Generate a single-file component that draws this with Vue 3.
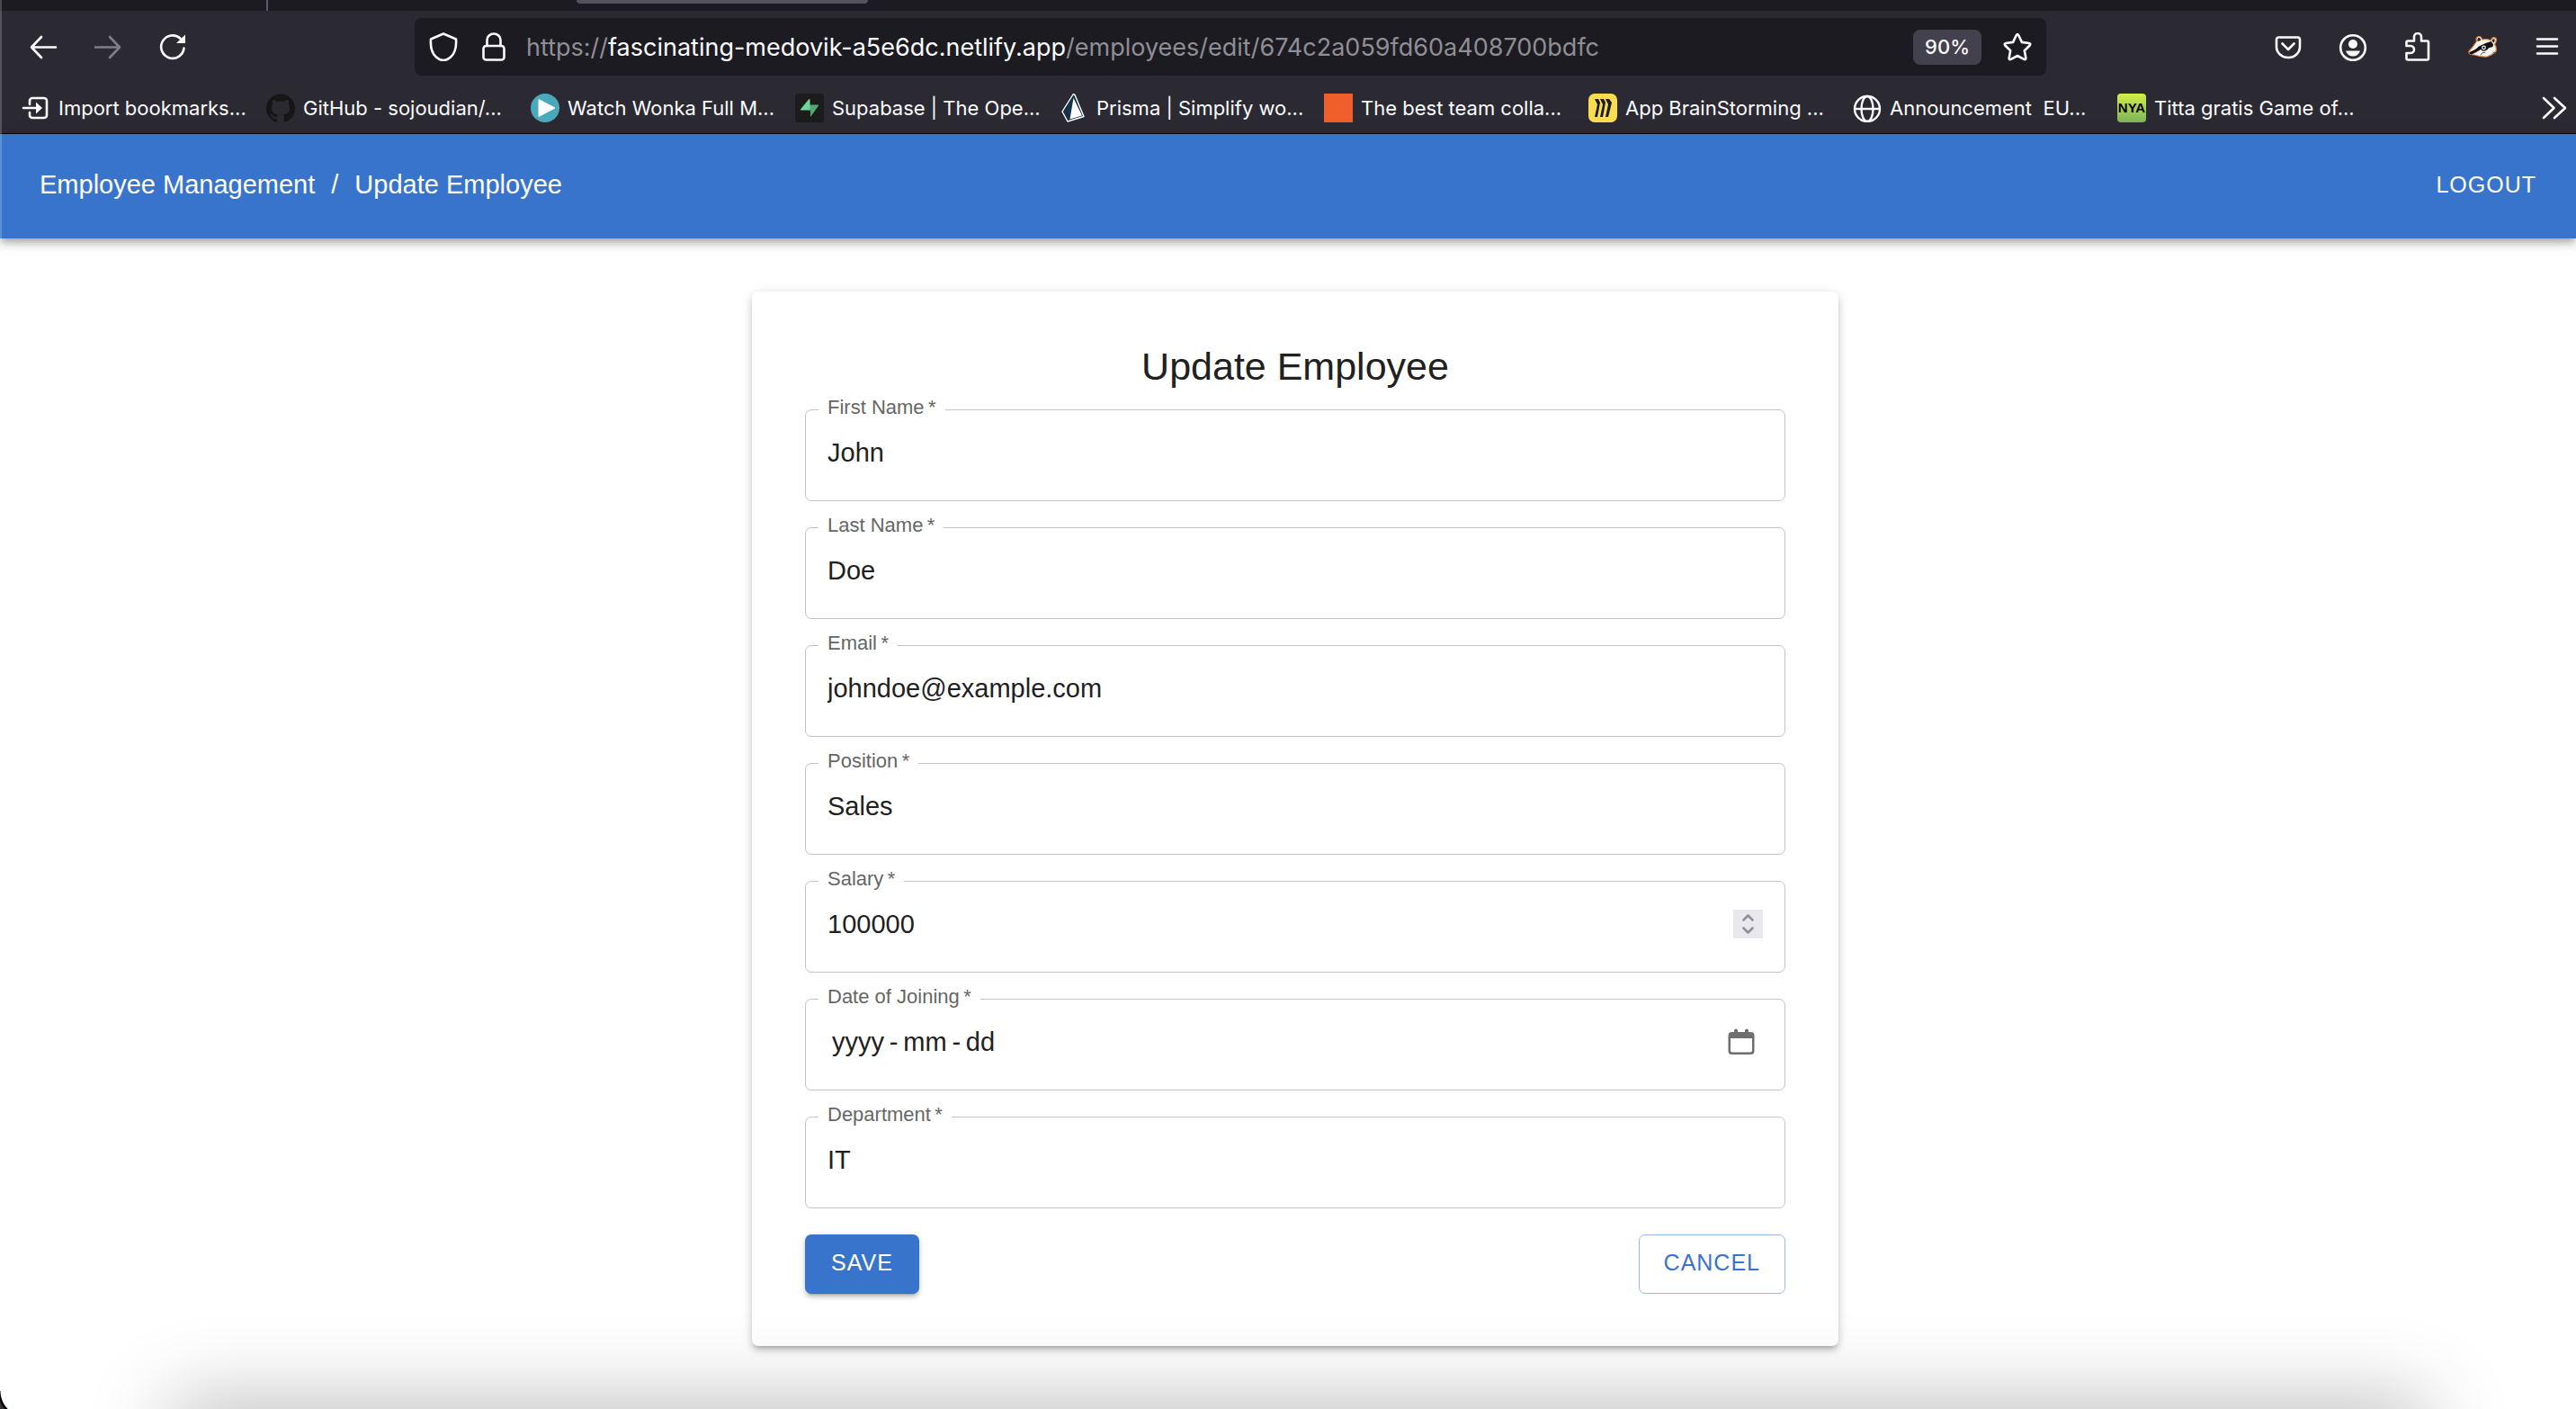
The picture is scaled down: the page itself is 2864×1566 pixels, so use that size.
<script setup>
import { ref } from 'vue'

const githubMark =
  'M12 .297c-6.63 0-12 5.373-12 12 0 5.303 3.438 9.8 8.205 11.385.6.113.82-.258.82-.577 0-.285-.01-1.04-.015-2.04-3.338.724-4.042-1.61-4.042-1.61C4.422 18.07 3.633 17.7 3.633 17.7c-1.087-.744.084-.729.084-.729 1.205.084 1.838 1.236 1.838 1.236 1.07 1.835 2.809 1.305 3.495.998.108-.776.417-1.305.76-1.605-2.665-.3-5.466-1.332-5.466-5.93 0-1.31.465-2.38 1.235-3.22-.135-.303-.54-1.523.105-3.176 0 0 1.005-.322 3.3 1.23.96-.267 1.98-.399 3-.405 1.02.006 2.04.138 3 .405 2.28-1.552 3.285-1.23 3.285-1.23.645 1.653.24 2.873.12 3.176.765.84 1.23 1.91 1.23 3.22 0 4.61-2.805 5.625-5.475 5.92.42.36.81 1.096.81 2.22 0 1.606-.015 2.896-.015 3.286 0 .315.21.69.825.57C20.565 22.092 24 17.592 24 12.297c0-6.627-5.373-12-12-12'

const bookmarks = [
  {
    title: 'Import bookmarks...',
    icon: '<path d="M9 12V8a3 3 0 0 1 3-3h13a3 3 0 0 1 3 3v16a3 3 0 0 1-3 3H12a3 3 0 0 1-3-3v-3M2 16h18" fill="none" stroke="#fbfbfe" stroke-width="2.6" stroke-linecap="round"/><path d="M16 9.500l7 6.500l-7 6.500z" fill="#fbfbfe"/>'
  },
  {
    title: 'GitHub - sojoudian/...',
    icon: `<path transform="scale(1.333)" d="${githubMark}" fill="#161616"/>`
  },
  {
    title: 'Watch Wonka Full M...',
    icon: '<circle cx="16" cy="16" r="16" fill="#4ba9be"/><path d="M9 6.500v19l18-9.500z" fill="#fff" stroke="#fff" stroke-linejoin="round"/>'
  },
  {
    title: 'Supabase | The Ope...',
    icon: '<rect width="32" height="32" rx="3" fill="#1c1c1c"/><path d="M17 26L26 13.500q.500-1-1-1H15v6h2z" fill="#53a876"/><path d="M15.500 6L6 17.500q-.500 1 1 1h9.500V6.500z" fill="#6fd69c"/>'
  },
  {
    title: 'Prisma | Simplify wo...',
    icon: '<path d="M15 1L3 20l6 11l18-5.500L17 1.500q-1-1-2-.5z" fill="#16324a" stroke="#fff" stroke-width="1.400" stroke-linejoin="round"/><path d="M15.500 5L11.500 28.500L25 24.500z" fill="#fff"/>'
  },
  {
    title: 'The best team colla...',
    icon: '<rect width="32" height="32" fill="#ef5f2c"/>'
  },
  {
    title: 'App BrainStorming ...',
    icon: '<rect width="32" height="32" rx="7" fill="#fadc50"/><path d="M7 6h4l2 4-3 16H7l3-14zM13 6h4l2 4-3 16h-3l3-14zM19 6h4l3 4-4 16h-3l3-14z" fill="#1c1c1e"/>'
  },
  {
    title: 'Announcement  EU...',
    icon: '<g fill="none" stroke="#fbfbfe" stroke-width="2.400"><circle cx="16" cy="17" r="14"/><ellipse cx="16" cy="17" rx="6.500" ry="14"/><path d="M2 17h28"/></g>'
  },
  { title: 'Titta gratis Game of...', badge: 'NYA' }
]

const fields = ref([
  { id: 'firstName', label: 'First Name', type: 'text', value: 'John' },
  { id: 'lastName', label: 'Last Name', type: 'text', value: 'Doe' },
  { id: 'email', label: 'Email', type: 'email', value: 'johndoe@example.com' },
  { id: 'position', label: 'Position', type: 'text', value: 'Sales' },
  { id: 'salary', label: 'Salary', type: 'number', value: 100000 },
  { id: 'joined', label: 'Date of Joining', type: 'text', value: '', placeholder: 'yyyy\u2009-\u2009mm\u2009-\u2009dd', calendar: true },
  { id: 'department', label: 'Department', type: 'text', value: 'IT' }
])
</script>

<template>
  <div class="window">
    <header class="chrome">
      <div class="tabs"><span class="tab-divider"></span><span class="tab-active"></span></div>
      <div class="toolbar">
        <div class="tools">
          <button class="tool" aria-label="Back">
            <svg viewBox="0 0 32 32"><path d="M30 16.500H3M14 5L3 16.500L14 28" /></svg>
          </button>
          <button class="tool dim" aria-label="Forward">
            <svg viewBox="0 0 32 32"><path d="M2 16.500h27M18 5l11 11.500L18 28" /></svg>
          </button>
          <button class="tool" aria-label="Reload">
            <svg viewBox="0 0 32 32"><path d="M28.500 17.500A12.700 12.700 0 1 1 24.500 6.800" /><path class="solid" d="M30 2.500v9.500H20z" /></svg>
          </button>
        </div>
        <div class="address">
          <svg class="address-icon" viewBox="0 0 32 32"><path d="M16 1.500L30 7.500q1 14-6 20Q20 31 16 31Q12 31 8 27.500Q1 21.500 2 7.500z" /></svg>
          <svg class="address-icon lock" viewBox="0 0 32 32"><path d="M8.500 15V8.500a7.500 7 0 0 1 15 0V15" /><rect x="4.500" y="15" width="23" height="15.500" rx="3" /></svg>
          <div class="url"><span>https://</span><b>fascinating-medovik-a5e6dc.netlify.app</b><span>/employees/edit/674c2a059fd60a408700bdfc</span></div>
          <button class="zoom">90%</button>
          <svg class="address-icon" viewBox="0 0 32 32"><path d="M14.700 3.300q1.300-2.300 2.600 0l3.600 7.600l8 1.100q2.300.500.800 2.500l-5.900 5.700l1.500 8.100q.200 2.400-2 1.600L16 26l-7.300 3.900q-2.200.800-2-1.600l1.500-8.100l-5.900-5.700q-1.500-2 .8-2.500l8-1.100z" /></svg>
        </div>
        <div class="tools">
          <button class="tool" aria-label="Save to Pocket">
            <svg viewBox="0 0 32 32"><path d="M5.500 5.500h21a2.500 2.500 0 0 1 2.500 2.500v8a13 12 0 0 1-26 0V8a2.500 2.500 0 0 1 2.500-2.500zM9.500 12.500l6.500 6.500l6.500-6.500" /></svg>
          </button>
          <button class="tool" aria-label="Account">
            <svg viewBox="0 0 32 32"><circle cx="16" cy="17" r="13.800" /><circle class="solid" cx="16" cy="13" r="5" /><path class="solid" d="M8 20.500h16q-2 6-8 6t-8-6z" /></svg>
          </button>
          <button class="tool" aria-label="Extensions">
            <svg viewBox="0 0 32 32"><path d="M5 30.500q-1.500 0-1.500-1.500v-6h4.500a4 4 0 0 0 0-8H3.500V11q0-1.500 1.500-1.500h7V5a4 4 0 0 1 8 0v4.500h6.500q1.500 0 1.500 1.500v18q0 1.500-1.500 1.500z" /></svg>
          </button>
          <button class="tool" aria-label="Privacy Badger">
            <svg viewBox="0 0 32 32">
              <path d="M1 21Q5 17 9.500 10Q8 5 12 4.500Q15 4.500 15.500 8Q21 7 25.500 9Q27 4 31 6.500Q32 10 29.500 13Q32 17 31 21Q27 25 21 27Q14 27.500 7 25Q0 25 1 21z" style="fill: #f4f4f4; stroke: #e0873e; stroke-width: 1.200" />
              <path d="M1.500 22Q9 19 12 15.500Q18 12 25.500 10Q30 14 26.500 16.500Q23 16 21 19.500Q17 22 14 19Q8 23 4 24.500Q1 24 1.500 22z" style="fill: #111; stroke: none" />
              <path d="M10.500 10q-.5-4 1.500-4t2 3zM26.500 9.500q1-3 3-2q.5 2-1 4z" style="fill: #222; stroke: none" />
              <circle cx="17.500" cy="17" r="1.800" style="fill: #111; stroke: #fff; stroke-width: 1.200" />
              <path d="M14 25q1-3 5-3M28 22l3 2" style="stroke: #555; stroke-width: 1" />
            </svg>
          </button>
          <button class="tool" aria-label="Menu">
            <svg viewBox="0 0 32 32"><path d="M5 7.500h22M5 15.500h22M5 23.500h22" /></svg>
          </button>
        </div>
      </div>
      <nav class="bookmarks">
        <a v-for="b in bookmarks" :key="b.title" class="bookmark" href="#">
          <span v-if="b.badge" class="favicon nya">{{ b.badge }}</span>
          <svg v-else class="favicon" viewBox="0 0 32 32" v-html="b.icon"></svg>
          <span>{{ b.title }}</span>
        </a>
        <button class="tool more" aria-label="More bookmarks">
          <svg viewBox="0 0 32 32"><path d="M4 5l11.500 11L4 27M16 5l12 11L16 27" /></svg>
        </button>
      </nav>
    </header>

    <div class="appbar">
      <nav class="crumbs">
        <a href="#">Employee Management</a>
        <span>/</span>
        <a href="#">Update Employee</a>
      </nav>
      <button class="logout">LOGOUT</button>
    </div>

    <main class="page">
      <form class="card" @submit.prevent>
        <h1>Update Employee</h1>
        <div v-for="f in fields" :key="f.id" class="field" :class="{ segmented: f.calendar }">
          <label :for="f.id">{{ f.label }}&thinsp;*</label>
          <input :id="f.id" v-model="f.value" :type="f.type" :placeholder="f.placeholder" required />
          <span v-if="f.type === 'number'" class="stepper">
            <button type="button" aria-label="Increase" @click="f.value++">
              <svg viewBox="0 0 33 16"><path d="M11.500 11.500l5-5l5 5" /></svg>
            </button>
            <button type="button" aria-label="Decrease" @click="f.value--">
              <svg viewBox="0 0 33 16"><path d="M11.500 4.500l5 5l5-5" /></svg>
            </button>
          </span>
          <button v-if="f.calendar" type="button" class="calendar" aria-label="Open calendar">
            <svg viewBox="0 0 32 32">
              <path d="M5.500 5H8V3.500a1.500 1.500 0 0 1 4 0V5h8V3.500a1.500 1.500 0 0 1 4 0V5h2.500A4 4 0 0 1 30.500 9v17a4 4 0 0 1-4 4h-21a4 4 0 0 1-4-4V9a4 4 0 0 1 4-4zM4 12v13.500A2 2 0 0 0 6 27.500h20a2 2 0 0 0 2-2V12z" fill="#6f6f6f" fill-rule="evenodd" />
            </svg>
          </button>
        </div>
        <div class="actions">
          <button type="submit" class="btn save">SAVE</button>
          <button type="button" class="btn cancel">CANCEL</button>
        </div>
      </form>
    </main>
    <div class="dock-shade"></div>
    <div class="corner"></div>
    <div class="edge"></div>
  </div>
</template>

<style>
body {
  margin: 0;
  background: #fff;
}
</style>

<style scoped>
.window {
  position: relative;
  display: flex;
  flex-direction: column;
  min-height: 100vh;
  overflow: hidden;
  font-family: "Liberation Sans", Arial, sans-serif;
  color: #212121;
}
* {
  box-sizing: border-box;
}
button {
  margin: 0;
  padding: 0;
  border: 0;
  background: none;
  font-family: inherit;
}
a {
  color: inherit;
  text-decoration: none;
}
svg {
  display: block;
}

/* browser chrome */
.chrome {
  background: #2b2a33;
  border-bottom: 1px solid #0c0c0d;
  color: #fbfbfe;
  font-family: Inter, "Noto Sans", sans-serif;
}
.tabs {
  display: flex;
  height: 12px;
  background: #1c1b22;
}
.tab-divider {
  width: 2px;
  margin-left: 296px;
  background: #5b5b66;
}
.tab-active {
  width: 324px;
  height: 4px;
  margin-left: 343px;
  border-radius: 0 0 6px 6px;
  background: #53525e;
}
.toolbar {
  display: flex;
  align-items: center;
  height: 80px;
  padding: 0 16px 0 32px;
}
.tools {
  display: flex;
  gap: 40px;
}
.tool {
  width: 32px;
  height: 32px;
  color: #fbfbfe;
}
.tool svg,
.address-icon {
  width: 32px;
  height: 32px;
  fill: none;
  stroke: #fbfbfe;
  stroke-width: 2.6;
  stroke-linecap: round;
  stroke-linejoin: round;
}
.tool .solid {
  fill: #fbfbfe;
  stroke: none;
}
.dim {
  opacity: 0.4;
}
.address {
  display: flex;
  flex: 1;
  align-items: center;
  height: 64px;
  margin: 0 253px;
  padding: 0 16px;
  border-radius: 8px;
  background: #1c1b22;
}
.address-icon {
  flex: none;
}
.lock {
  margin: 0 20px 0 24px;
}
.url {
  flex: 1;
  overflow: hidden;
  padding-top: 2px;
  font-size: 27px;
  line-height: 40px;
  white-space: nowrap;
  color: #8f8e94;
}
.url b {
  font-weight: 400;
  color: #fbfbfe;
}
.zoom {
  height: 39px;
  margin-right: 24px;
  padding: 0 13px;
  border-radius: 8px;
  background: #42414d;
  color: #fbfbfe;
  font-size: 22px;
  font-weight: 500;
}
.bookmarks {
  display: flex;
  align-items: center;
  height: 56px;
  padding: 0 8px 0 24px;
}
.bookmark {
  display: flex;
  flex: 0 0 294px;
  align-items: center;
  gap: 9px;
  font-size: 22px;
  line-height: 32px;
  white-space: pre;
}
.bookmark:first-child {
  flex-basis: 272px;
}
.favicon {
  flex: none;
  width: 32px;
  height: 32px;
}
.nya {
  display: flex;
  justify-content: center;
  border-radius: 4px;
  background: linear-gradient(#d3f045, #7db35a);
  color: #000;
  font-family: "Liberation Sans", Arial, sans-serif;
  font-size: 15px;
  font-weight: 700;
}
.more {
  margin-left: auto;
}

/* application bar */
.appbar {
  display: flex;
  align-items: center;
  justify-content: space-between;
  height: 116px;
  padding: 0 44px;
  padding-bottom: 4px;
  background: #3874cc;
  color: #fff;
  box-shadow: 0 4px 7px -2px rgba(0, 0, 0, 0.2), 0 7px 9px rgba(0, 0, 0, 0.14), 0 2px 18px rgba(0, 0, 0, 0.12);
}
.crumbs {
  display: flex;
  gap: 18px;
  font-size: 29px;
  line-height: 44px;
}
.logout {
  color: #fff;
  font-size: 25px;
  letter-spacing: 1px;
}

/* form */
.page {
  display: flex;
  flex: 1;
  align-items: flex-start;
  justify-content: center;
  padding: 59px 0 60px 16px;
}
.card {
  width: 100%;
  max-width: 1208px;
  padding: 58px 59px;
  border-radius: 7px;
  background: #fff;
  box-shadow: 0 5px 5px -4px rgba(0, 0, 0, 0.2), 0 5px 7px rgba(0, 0, 0, 0.14), 0 2px 14px rgba(0, 0, 0, 0.12);
}
h1 {
  margin: 0 0 23px;
  font-size: 43px;
  font-weight: 400;
  line-height: 50px;
  text-align: center;
}
.field {
  position: relative;
  display: flex;
  align-items: center;
  margin-bottom: 29px;
  padding: 26px 24px 32px;
  border: 1px solid #c4c4c4;
  border-radius: 7px;
}
.field label {
  position: absolute;
  top: -18px;
  left: 14px;
  padding: 0 10px;
  background: #fff;
  color: #666;
  font-size: 22px;
  line-height: 30px;
}
.field input {
  flex: 1;
  min-width: 0;
  height: 42px;
  padding: 0;
  border: 0;
  outline: 0;
  background: none;
  color: #212121;
  font-family: inherit;
  font-size: 29px;
  appearance: textfield;
}
.field input::placeholder {
  color: #212121;
  opacity: 1;
}
.segmented input {
  padding-left: 5px;
}
.field input::-webkit-inner-spin-button {
  display: none;
}
.stepper {
  display: flex;
  flex-direction: column;
  width: 33px;
  background: #e9e9ed;
}
.stepper svg {
  width: 33px;
  height: 16px;
  fill: none;
  stroke: #8f8f9d;
  stroke-width: 2.6;
  stroke-linecap: round;
  stroke-linejoin: round;
}
.calendar {
  width: 32px;
  height: 32px;
  margin-right: 8px;
}
.actions {
  display: flex;
  justify-content: space-between;
}
.btn {
  height: 66px;
  padding: 0 29px 4px;
  border-radius: 7px;
  font-size: 25px;
  letter-spacing: 1px;
}
.save {
  background: #3874cc;
  color: #fff;
  box-shadow: 0 5px 2px -4px rgba(0, 0, 0, 0.2), 0 4px 4px rgba(0, 0, 0, 0.14), 0 2px 9px rgba(0, 0, 0, 0.12);
}
.cancel {
  padding: 0 27px 4px;
  border: 1px solid #9bb9e5;
  color: #3874cc;
}

/* shade along the bottom edge and the rounded window corner */
.dock-shade {
  position: absolute;
  right: 185px;
  bottom: -60px;
  left: 210px;
  height: 50px;
  box-shadow: 0 0 90px 20px rgba(0, 0, 0, 0.26);
  pointer-events: none;
}
.corner {
  position: absolute;
  bottom: 0;
  left: 0;
  width: 20px;
  height: 20px;
  background: radial-gradient(circle at 29px 0, transparent 28px, #000 29px, #000 30px, #3a322e 32px);
}
.edge {
  position: absolute;
  top: 0;
  left: 0;
  width: 2px;
  height: 265px;
  background: rgba(255, 255, 255, 0.2);
}
</style>
